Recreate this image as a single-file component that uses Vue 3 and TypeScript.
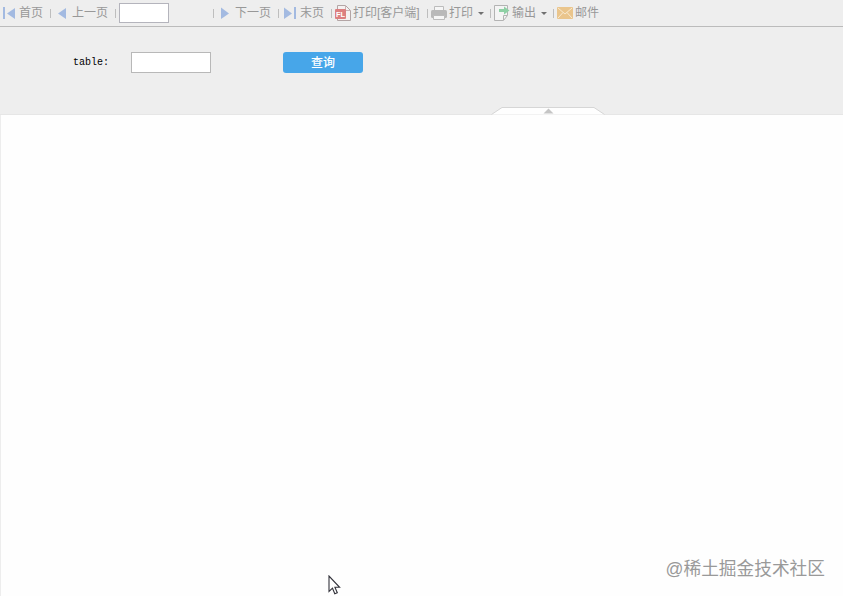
<script setup lang="ts">
import { ref } from 'vue'

interface ToolItem {
  id: string
  label?: string
  menu?: boolean
}

const items: ToolItem[] = [
  { id: 'first', label: '首页' },
  { id: 'prev', label: '上一页' },
  { id: 'page' },
  { id: 'next', label: '下一页' },
  { id: 'last', label: '末页' },
  { id: 'client', label: '打印[客户端]' },
  { id: 'print', label: '打印', menu: true },
  { id: 'export', label: '输出', menu: true },
  { id: 'mail', label: '邮件' },
]

const page = ref('')
const table = ref('')
</script>

<template>
  <div class="viewer">
    <header class="toolbar">
      <div v-for="item in items" :key="item.id" class="tool" :class="item.id">
        <input v-if="item.id === 'page'" v-model="page" class="page-input" type="text" />
        <template v-else>
          <svg v-if="item.id === 'first'" class="icon" width="16" height="16" viewBox="0 0 16 16">
            <path class="nav" d="M1 2h2v12H1zM13 3v11L5 8.5z" />
          </svg>
          <svg v-else-if="item.id === 'prev'" class="icon" width="16" height="16" viewBox="0 0 16 16">
            <path class="nav" d="M11 3v11L3 8.5z" />
          </svg>
          <svg v-else-if="item.id === 'next'" class="icon" width="16" height="16" viewBox="0 0 16 16">
            <path class="nav" d="M3 2.500v11.500l8-5.500z" />
          </svg>
          <svg v-else-if="item.id === 'last'" class="icon" width="16" height="16" viewBox="0 0 16 16">
            <path class="nav" d="M2 2.500v11.500l8-5.500zM12 2h2v12h-2z" />
          </svg>
          <svg v-else-if="item.id === 'client'" class="icon" width="16" height="16" viewBox="0 0 16 16">
            <path d="M2.500.5h8l5 5v10h-13z" fill="#f5f1f1" stroke="#b3a5a5" />
            <path d="M10.500.5v5h5" fill="none" stroke="#c9b4b4" />
            <rect y="4" width="11" height="10" rx="1" fill="#dc7f80" />
            <text class="badge" x="5.500" y="12" text-anchor="middle">FL</text>
          </svg>
          <svg v-else-if="item.id === 'print'" class="icon" width="16" height="16" viewBox="0 0 16 16">
            <path d="M3.500 6V1.500h9V6" fill="#f6f6f6" stroke="#bcbcbc" />
            <rect y="5" width="16" height="8" rx="1.500" fill="#b9b9b9" />
            <path d="M2.500 10.500h11v4h-11z" fill="#f6f6f6" stroke="#bcbcbc" />
          </svg>
          <svg v-else-if="item.id === 'export'" class="icon" width="17" height="16" viewBox="0 0 17 16">
            <path d="M.5.5h13v10l-4 5h-9z" fill="#f4f4f4" stroke="#b3b3b3" />
            <path d="M9.500 15v-4.500H13" fill="none" stroke="#b3b3b3" />
            <path d="M5 4h5V1.500L15.500 5.500 10 9.500V7H5z" fill="#8fd0a5" />
          </svg>
          <svg v-else class="icon" width="16" height="16" viewBox="0 0 16 16">
            <rect y="2" width="16" height="12" rx="1" fill="#eac58c" />
            <path d="M1 3l7 6 7-6M1 13l5-5.500M15 13l-5-5.500" fill="none" stroke="#f9ead0" />
          </svg>
          <span class="label">{{ item.label }}</span>
          <span v-if="item.menu" class="caret"></span>
        </template>
      </div>
    </header>

    <section class="query">
      <label class="field-label" for="table">table:</label>
      <input id="table" v-model="table" class="field" type="text" />
      <button class="submit" type="button">查询</button>
      <svg class="handle" width="114" height="8" viewBox="0 0 114 8">
        <path d="M.5 7.500L11 .5h92l10.500 7z" fill="#fefefe" />
        <path d="M.5 7.500L11 .5h92l10.500 7" fill="none" stroke="#d6d6d6" />
        <path d="M52.500 6.500l5-5 5 5z" fill="#c5c5c5" />
      </svg>
    </section>

    <main class="report">
      <span class="watermark">@稀土掘金技术社区</span>
      <svg class="cursor" width="13" height="20" viewBox="0 0 13 20">
        <path d="M1 1v15.500l3.500-3.300 2.300 5.600 2.500-1-2.400-5.500h4.700z" fill="#fff" stroke="#34343c" stroke-width="1.100" />
      </svg>
    </main>
  </div>
</template>

<style>
body {
  background: #fefefe;
  overflow: hidden;
}
</style>

<style scoped>
.viewer {
  display: flex;
  flex-direction: column;
  height: 596px;
  font-family: "Liberation Sans", "Noto Sans CJK SC", sans-serif;
  font-size: 12px;
}

.toolbar {
  display: flex;
  box-sizing: border-box;
  height: 27px;
  flex: none;
  padding-left: 1px;
  background: #eee;
  border-bottom: 1px solid #bbb;
}

.tool {
  display: flex;
  align-items: center;
  box-sizing: border-box;
  height: 26px;
  flex: none;
  background: linear-gradient(#bebebe, #bebebe) right 9px / 1px 9px no-repeat;
  color: #989898;
  line-height: 18px;
  white-space: nowrap;
}

.first { width: 50px; padding-left: 1px; }
.prev { width: 65px; padding-left: 4px; }
.page { width: 98px; padding-left: 3px; }
.next { width: 65px; padding-left: 4px; }
.last { width: 53px; padding-left: 3px; }
.client { width: 96px; padding-left: 3px; }
.print { width: 63px; padding-left: 3px; }
.export { width: 63px; padding-left: 3px; }
.mail { padding-left: 3px; background: none; }

.icon {
  flex: none;
  margin-right: 2px;
}

.prev .label,
.next .label,
.first .label { margin-left: -1px; }
.export .icon { margin-right: 1px; }
.nav { fill: #a3bae1; }

.badge {
  fill: #fff;
  font: bold 7.5px "Liberation Sans", sans-serif;
}

.caret {
  margin-left: 5px;
  border: 3px solid transparent;
  border-top-color: #707070;
  border-bottom: 0;
}

input {
  box-sizing: border-box;
  padding: 1px 3px;
  border: 1px solid #b8b8b8;
  border-radius: 0;
  background: #fff;
  font: inherit;
  outline: none;
}

.page-input {
  width: 50px;
  height: 20px;
  border-color: #b4b4bc;
}

.query {
  position: relative;
  display: flex;
  align-items: flex-start;
  box-sizing: border-box;
  height: 88px;
  flex: none;
  padding: 25px 0 0 73px;
  background: #eee;
  border-bottom: 1px solid #e6e6e6;
}

.field-label {
  width: 58px;
  color: #000;
  font: 10px/22px "Liberation Mono", monospace;
}

.field {
  width: 80px;
  height: 21px;
}

.submit {
  width: 80px;
  height: 21px;
  margin-left: 72px;
  padding: 1px 0 0;
  border: 0;
  border-radius: 3px;
  background: #47a6e9;
  color: #fff;
  font: 500 12px/20px "Liberation Sans", "Noto Sans CJK SC", sans-serif;
}

.handle {
  position: absolute;
  left: 491px;
  bottom: -1px;
}

.report {
  position: relative;
  flex: 1;
  background: #fefefe;
  border-left: 1px solid #ededed;
}

.watermark {
  position: absolute;
  right: 18px;
  bottom: 14px;
  color: #999;
  font-size: 17.7px;
  line-height: 26px;
  white-space: nowrap;
}

.cursor {
  position: absolute;
  left: 327px;
  bottom: 1px;
}
</style>
